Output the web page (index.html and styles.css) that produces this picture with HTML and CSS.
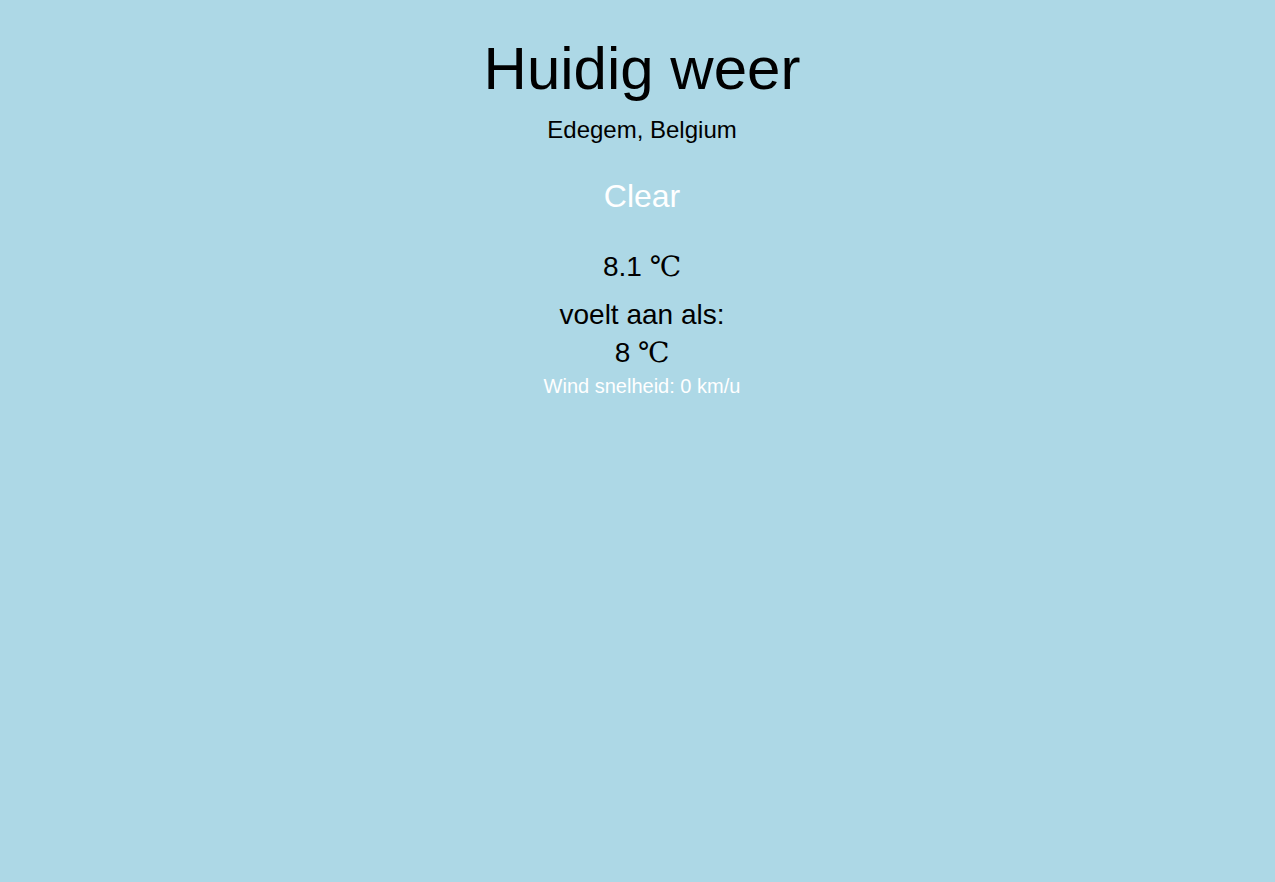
FILE: index.html
```html
<!DOCTYPE html>
<html lang="nl">
<head>
<meta charset="utf-8">
<title>Huidig weer</title>
<link rel="stylesheet" href="styles.css">
</head>
<body>
<main class="weather">
  <h1 class="title">Huidig weer</h1>
  <p class="location">Edegem, Belgium</p>
  <p class="condition">Clear</p>
  <p class="temp">8.1 <span class="unit">&#8451;</span></p>
  <p class="feels-label">voelt aan als:</p>
  <p class="feels">8 <span class="unit">&#8451;</span></p>
  <p class="wind">Wind snelheid: 0 km/u</p>
</main>
</body>
</html>
```
FILE: styles.css
```css
html, body {
  margin: 0;
  padding: 0;
  background: #add8e6;
  min-height: 100%;
}
body {
  font-family: "Liberation Sans", Arial, sans-serif;
  color: #000;
}
.weather {
  display: flex;
  flex-direction: column;
  align-items: center;
  text-align: center;
  padding-top: 34px;
  padding-left: 9px;
}
.weather p, .weather h1 {
  margin: 0;
  line-height: normal;
}
.title {
  font-size: 60px;
  font-weight: normal;
}
.location {
  font-size: 24px;
  margin-top: 13px !important;
}
.condition {
  font-size: 32px;
  color: #fff;
  margin-top: 34px !important;
}
.temp {
  font-size: 28px;
  margin-top: 36px !important;
}
.feels-label {
  font-size: 28px;
  margin-top: 16px !important;
}
.feels {
  font-size: 28px;
  margin-top: 6px !important;
}
.wind {
  font-size: 20px;
  color: #fff;
  margin-top: 6px !important;
}
.unit {
  font-family: "DejaVu Serif", "Liberation Serif", serif;
  line-height: 0;
}
```
